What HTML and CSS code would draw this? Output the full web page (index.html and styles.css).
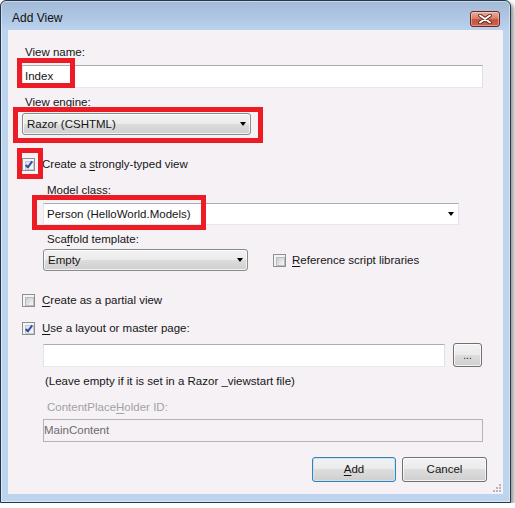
FILE: index.html
```html
<!DOCTYPE html>
<html lang="en">
<head>
    <meta charset="UTF-8">
    <title>Add View</title>
    <link rel="stylesheet" href="styles.css">
</head>
<body>
    <div class="window">
        <div class="titlebar">
            <span class="title">Add View</span>
            <span class="close">
                <svg width="14" height="10" viewBox="0 0 14 10">
                    <path d="M2 1.5 L12 8.5 M12 1.5 L2 8.5" stroke="#5a1d14" stroke-width="3.6" stroke-linecap="round"/>
                    <path d="M2 1.5 L12 8.5 M12 1.5 L2 8.5" stroke="#fff" stroke-width="2" stroke-linecap="round"/>
                </svg>
            </span>
        </div>
        <div class="client">
            <div class="label l-name">View <u>n</u>ame:</div>
            <div class="textbox tb-name">Index</div>
            <div class="label l-engine">View <u>e</u>ngine:</div>
            <div class="dropdown dd-engine">Razor (CSHTML)<span class="arrow"></span></div>
            <div class="check-row r-typed"><span class="checkbox checked"></span><span>Create a <u>s</u>trongly-typed view</span></div>

            <div class="group">
                <div class="label sub l-model">Model class:</div>
                <div class="combo">Person (HelloWorld.Models)<span class="arrow"></span></div>
                <div class="label sub l-scaffold">Sca<u>f</u>fold template:</div>
                <div class="row r-scaffold">
                    <div class="dropdown dd-scaffold">Empty<span class="arrow"></span></div>
                    <div class="check-row r-ref"><span class="checkbox"></span><span><u>R</u>eference script libraries</span></div>
                </div>
            </div>

            <div class="check-row r-partial"><span class="checkbox"></span><span><u>C</u>reate as a partial view</span></div>
            <div class="check-row r-layout"><span class="checkbox checked"></span><span><u>U</u>se a layout or master page:</span></div>

            <div class="group">
                <div class="row r-master">
                    <div class="textbox tb-master"></div>
                    <div class="button btn-browse">...</div>
                </div>
                <div class="hint">(Leave empty if it is set in a Razor _viewstart file)</div>
                <div class="label sub disabled l-cph">ContentPlace<u>H</u>older ID:</div>
                <div class="textbox tb-cph disabled">MainContent</div>
            </div>

            <div class="buttons">
                <div class="button default btn-add"><u>A</u>dd</div>
                <div class="button btn-cancel">Cancel</div>
            </div>

            <svg class="grip" width="9" height="9" viewBox="0 0 9 9">
                <rect x="7" y="1" width="2" height="2" fill="#b8b6bb"/>
                <rect x="4" y="4" width="2" height="2" fill="#b8b6bb"/>
                <rect x="7" y="4" width="2" height="2" fill="#b8b6bb"/>
                <rect x="1" y="7" width="2" height="2" fill="#b8b6bb"/>
                <rect x="4" y="7" width="2" height="2" fill="#b8b6bb"/>
                <rect x="7" y="7" width="2" height="2" fill="#b8b6bb"/>
            </svg>

            <!-- red highlight boxes drawn over the dialog -->
            <div class="mark mark-name"></div>
            <div class="mark mark-engine"></div>
            <div class="mark mark-check"></div>
            <div class="mark mark-model"></div>
        </div>
    </div>
</body>
</html>
```

FILE: styles.css
```css
body {
    margin: 0;
    background: #fff;
    font-family: "Liberation Sans", Arial, sans-serif;
    font-size: 11.5px;
    color: #151515;
}

u {
    text-decoration: underline;
    text-underline-offset: 2px;
}

.window {
    width: 511px;
    height: 503px;
    box-sizing: border-box;
    border: 1px solid #25374d;
    border-radius: 6px 6px 0 0;
    background: linear-gradient(#a2bad7, #b3cae6 20px, #bdd4ef 30px, #bdd4ef);
    box-shadow: 3px 3px 4px rgba(0, 0, 0, 0.4), inset 0 0 0 1px rgba(255, 255, 255, 0.45);
    display: flex;
    flex-direction: column;
    padding: 0 7px 8px 7px;
}

.titlebar {
    height: 29px;
    flex: none;
    display: flex;
    align-items: flex-start;
    justify-content: space-between;
    padding: 0 3px 0 4px;
}

.title {
    margin-top: 10px;
    line-height: 15px;
    font-size: 12px;
    color: #111;
}

.close {
    margin-top: 10px;
    width: 30px;
    height: 16px;
    box-sizing: border-box;
    border: 1px solid #6e271d;
    border-radius: 3px;
    background: linear-gradient(#e8ad9f, #d88070 45%, #c9523d 55%, #c8644f);
    box-shadow: inset 0 0 0 1px rgba(255, 255, 255, 0.35);
    display: flex;
    align-items: center;
    justify-content: center;
}

.client {
    flex: 1;
    position: relative;
    background: #f5f1f5;
    padding: 15px 0 0 14px;
}

.label {
    line-height: 15px;
    padding-left: 3px;
}

.label.sub {
    padding-left: 4px;
}

.disabled {
    color: #a3a1a5;
}

.l-engine { margin-top: 7px; }
.l-model { margin-top: 11px; }
.l-scaffold { margin-top: 7px; }
.l-cph { margin-top: 11px; }

.textbox {
    box-sizing: border-box;
    height: 23px;
    line-height: 21px;
    padding-left: 2px;
    background: #fff;
    border: 1px solid #e2e3ea;
    border-top-color: #abadb3;
    border-right-color: #dbdfe6;
    border-bottom-color: #e3e9ef;
}

.tb-name {
    width: 461px;
    margin-top: 5px;
}

.tb-master {
    width: 402px;
}

.tb-cph {
    width: 440px;
    margin-top: 4px;
    padding-left: 0;
    background: #f5f1f5;
    border-color: #b5b3b8;
    color: #6d6b6f;
}

.dropdown {
    position: relative;
    box-sizing: border-box;
    height: 22px;
    line-height: 20px;
    padding-left: 4px;
    border: 1px solid #8c8c8c;
    border-radius: 3px;
    background: linear-gradient(#f2f2f2, #ebebeb 50%, #dddddd 50%, #cfcfcf);
    box-shadow: inset 0 0 0 1px rgba(255, 255, 255, 0.7);
}

.dd-engine {
    width: 229px;
    margin-top: 3px;
}

.dd-scaffold {
    width: 205px;
}

.combo {
    position: relative;
    box-sizing: border-box;
    width: 416px;
    height: 22px;
    margin-top: 5px;
    line-height: 20px;
    padding-left: 3px;
    background: #fff;
    border: 1px solid #e2e3ea;
    border-top-color: #abadb3;
    border-bottom-color: #e3e9ef;
}

.arrow {
    position: absolute;
    right: 4px;
    top: 8px;
    width: 0;
    height: 0;
    border-left: 3.5px solid transparent;
    border-right: 3.5px solid transparent;
    border-top: 4px solid #000;
}

.check-row {
    display: flex;
    align-items: center;
    gap: 7px;
    line-height: 15px;
}

.r-typed { margin-top: 22px; }
.r-partial { margin-top: 22px; }
.r-layout { margin-top: 13px; }

.checkbox {
    position: relative;
    flex: none;
    width: 13px;
    height: 13px;
    box-sizing: border-box;
    border: 1px solid #8f8f8f;
    background: #f4f4f4;
    padding: 2px;
}

.checkbox::before {
    content: "";
    display: block;
    width: 7px;
    height: 7px;
    border: 1px solid #b9bbbe;
    background: linear-gradient(135deg, #c9cdd3, #f6f6f6);
}

.checkbox.checked::before {
    border-color: #c6c8cc;
    background: linear-gradient(135deg, #dde0e6, #fafafa);
}

.checkbox.checked::after {
    content: "";
    position: absolute;
    left: 4px;
    top: 1px;
    width: 2px;
    height: 6px;
    border: solid #2f4fa6;
    border-width: 0 2px 2px 0;
    transform: rotate(38deg);
}

.group {
    margin-left: 21px;
}

.row {
    display: flex;
    align-items: center;
}

.r-scaffold {
    margin-top: 2px;
    gap: 25px;
}

.r-ref {
    gap: 6px;
}

.r-master {
    margin-top: 7px;
    gap: 8px;
}

.hint {
    margin-top: 7px;
    line-height: 15px;
    padding-left: 2px;
}

.button {
    box-sizing: border-box;
    border: 1px solid #707070;
    border-radius: 3px;
    background: linear-gradient(#f2f2f2, #ebebeb 50%, #dddddd 50%, #cfcfcf);
    box-shadow: inset 0 0 0 1px rgba(255, 255, 255, 0.75);
    text-align: center;
}

.btn-browse {
    width: 29px;
    height: 24px;
    line-height: 24px;
    font-size: 10px;
}

.buttons {
    display: flex;
    justify-content: flex-end;
    gap: 6px;
    margin-top: 15px;
    padding-right: 16px;
}

.btn-add,
.btn-cancel {
    height: 25px;
    line-height: 23px;
}

.btn-add {
    width: 84px;
}

.btn-cancel {
    width: 85px;
}

.button.default {
    border-color: #3c7fb1;
    box-shadow: inset 0 0 0 1px #c4e5f6;
}

.grip {
    position: absolute;
    right: 2px;
    bottom: 2px;
}

.mark {
    position: absolute;
    box-sizing: border-box;
    border: 5px solid #ed1c24;
}

.mark-name {
    left: 9px;
    top: 28px;
    width: 58px;
    height: 30px;
}

.mark-engine {
    left: 5px;
    top: 77px;
    width: 250px;
    height: 36px;
}

.mark-check {
    left: 9px;
    top: 118px;
    width: 26px;
    height: 31px;
}

.mark-model {
    left: 24px;
    top: 165px;
    width: 174px;
    height: 35px;
}
```
